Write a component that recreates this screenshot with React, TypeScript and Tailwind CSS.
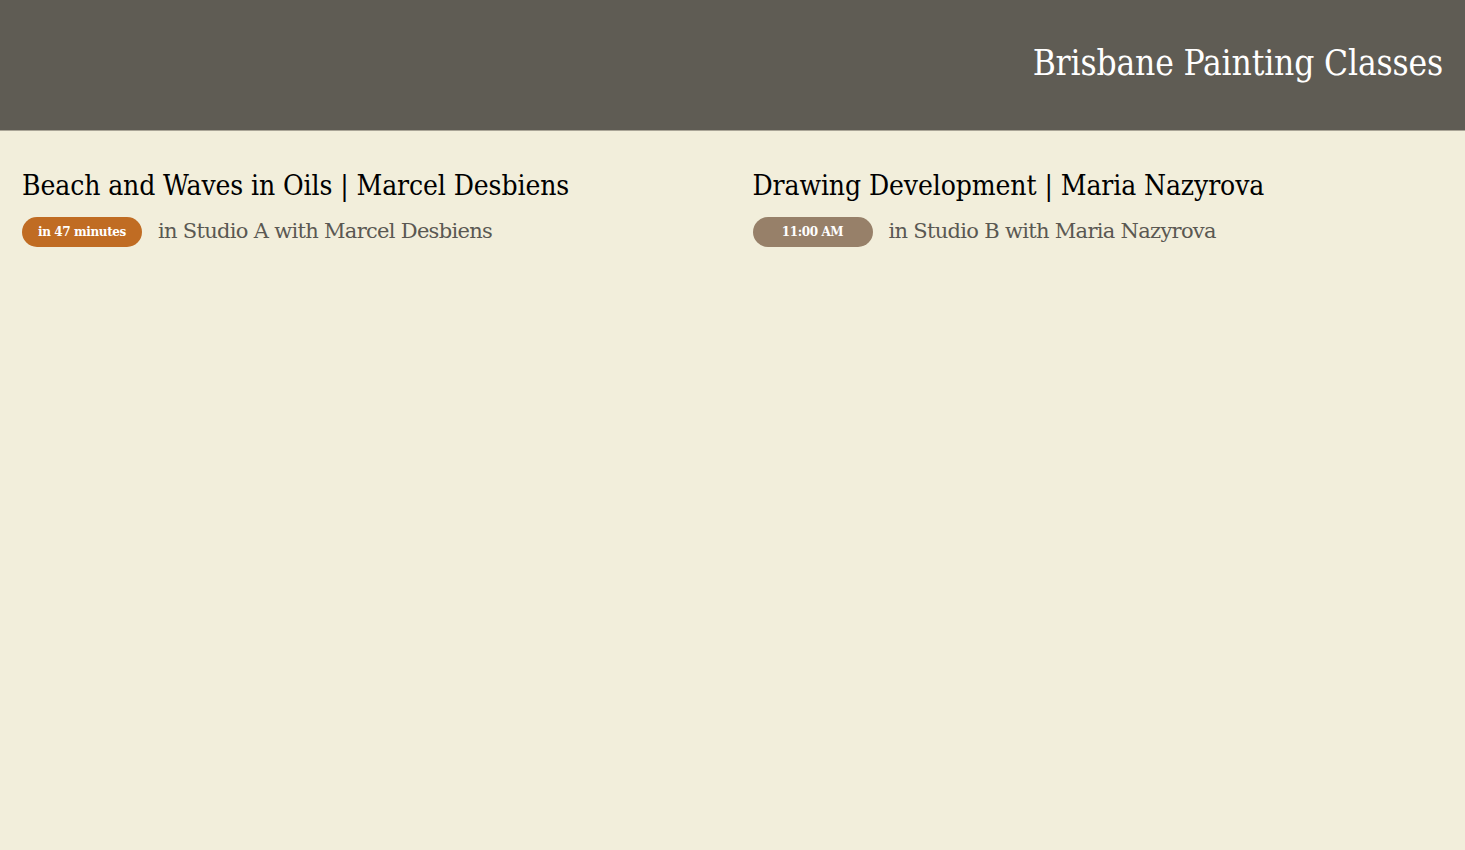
const classes = [
  {
    title: "Beach and Waves in Oils | Marcel Desbiens",
    when: "in 47 minutes",
    soon: true,
    where: "in Studio A with Marcel Desbiens",
  },
  {
    title: "Drawing Development | Maria Nazyrova",
    when: "11:00 AM",
    soon: false,
    where: "in Studio B with Maria Nazyrova",
  },
];

export default function App() {
  return (
    <div className="min-h-[850px] bg-[#f2eedb] font-['DejaVu_Serif',serif]">
      <header className="h-[131px] bg-[#5f5c54] border-b border-[#aaa597] flex items-center justify-end px-[22px]">
        <h1 className="text-white text-[35px] font-['DejaVu_Serif_Condensed','DejaVu_Serif',serif] tracking-[-0.15px] pb-[3px]">
          Brisbane Painting Classes
        </h1>
      </header>
      <main className="grid grid-cols-2 pt-[38px]">
        {classes.map((c, i) => (
          <div key={c.title} className={i === 0 ? "pl-[22px] pr-[20px]" : "pl-[20px] pr-[22px]"}>
            <h2 className="text-[28px] text-black font-['DejaVu_Serif_Condensed','DejaVu_Serif',serif] tracking-[-0.1px] leading-[34px]">
              {c.title}
            </h2>
            <div className="flex items-center mt-[13px]">
              <span
                className={`w-[120px] h-[30px] rounded-full flex items-center justify-center text-white text-[12px] font-bold tracking-[-0.4px] ${
                  c.soon ? "bg-[#c06c23]" : "bg-[#978069]"
                }`}
              >
                {c.when}
              </span>
              <span className="ml-[16px] text-[21px] text-[#5a5852] tracking-[-0.7px]">
                {c.where}
              </span>
            </div>
          </div>
        ))}
      </main>
    </div>
  );
}
